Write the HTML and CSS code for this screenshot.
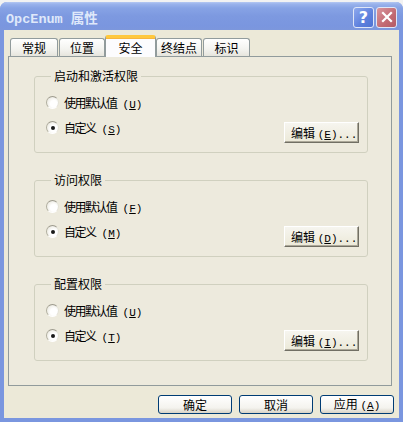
FILE: index.html
```html
<!DOCTYPE html>
<html lang="zh-CN">
<head>
    <meta charset="UTF-8">
    <title>OpcEnum 属性</title>
    <link rel="stylesheet" href="styles.css">
</head>
<body>
    <div class="window">
        <div class="titlebar">
            <span class="title">OpcEnum 属性</span>
            <div class="caption-buttons">
                <span class="cap-btn help">?</span>
                <span class="cap-btn close">
                    <svg width="12" height="12" viewBox="0 0 12 12">
                        <path d="M2 2 L10 10 M10 2 L2 10" stroke="#fff" stroke-width="2.2" stroke-linecap="square"/>
                    </svg>
                </span>
            </div>
        </div>
        <div class="client">
            <div class="tabs">
                <div class="tab t-general">常规</div>
                <div class="tab t-location">位置</div>
                <div class="tab t-security active">安全</div>
                <div class="tab t-endpoint">终结点</div>
                <div class="tab t-identity">标识</div>
            </div>
            <div class="panel">
                <fieldset class="group">
                    <legend>启动和激活权限</legend>
                    <div class="row">
                        <span class="radio"></span>
                        <span class="label">使用默认值<span class="key">(<u>U</u>)</span></span>
                    </div>
                    <div class="row row-edit">
                        <span class="radio checked"></span>
                        <span class="label">自定义<span class="key">(<u>S</u>)</span></span>
                        <button class="edit">编辑 <span class="key">(<u>E</u>)...</span></button>
                    </div>
                </fieldset>
                <fieldset class="group">
                    <legend>访问权限</legend>
                    <div class="row">
                        <span class="radio"></span>
                        <span class="label">使用默认值<span class="key">(<u>F</u>)</span></span>
                    </div>
                    <div class="row row-edit">
                        <span class="radio checked"></span>
                        <span class="label">自定义<span class="key">(<u>M</u>)</span></span>
                        <button class="edit">编辑 <span class="key">(<u>D</u>)...</span></button>
                    </div>
                </fieldset>
                <fieldset class="group">
                    <legend>配置权限</legend>
                    <div class="row">
                        <span class="radio"></span>
                        <span class="label">使用默认值<span class="key">(<u>U</u>)</span></span>
                    </div>
                    <div class="row row-edit">
                        <span class="radio checked"></span>
                        <span class="label">自定义<span class="key">(<u>T</u>)</span></span>
                        <button class="edit">编辑 <span class="key">(<u>I</u>)...</span></button>
                    </div>
                </fieldset>
            </div>
            <div class="actions">
                <button class="btn">确定</button>
                <button class="btn">取消</button>
                <button class="btn">应用 <span class="key">(<u>A</u>)</span></button>
            </div>
        </div>
    </div>
</body>
</html>
```

FILE: styles.css
```css
body {
    margin: 0;
    background: #f2f2f2;
    font-family: "Noto Sans CJK SC", sans-serif;
    font-size: 12px;
    color: #000;
}
.window {
    width: 403px;
    height: 420px;
    margin-top: 2px;
    display: flex;
    flex-direction: column;
    background: #7a96df;
    border-radius: 7px 7px 0 0;
    overflow: hidden;
}
.titlebar {
    height: 28px;
    flex: none;
    display: flex;
    align-items: center;
    justify-content: space-between;
    padding: 0 6px;
    background: linear-gradient(#b4c8f2 0, #9ab3ec 2px, #87a3e5 6px, #7d99e0 14px, #7a96df 24px, #7c97dc 28px);
}
.title {
    font-family: "Liberation Mono", "Noto Sans CJK SC", monospace;
    font-weight: bold;
    font-size: 13.5px;
    color: #dfe8fa;
    padding-top: 1px;
}
.caption-buttons {
    display: flex;
    gap: 2px;
    padding-top: 2px;
}
.cap-btn {
    width: 19px;
    height: 19px;
    border: 1px solid #dfe6f7;
    border-radius: 3px;
    display: flex;
    align-items: center;
    justify-content: center;
}
.help {
    background: linear-gradient(135deg, #8ea9ee, #5d80dd 60%, #4f72d2);
    color: #fff;
    font-family: "DejaVu Sans", sans-serif;
    font-weight: bold;
    font-size: 16px;
    line-height: 19px;
}
.close {
    background: linear-gradient(135deg, #d9959c, #c26a73 60%, #b35a64);
}

.client {
    flex: 1;
    margin: 0 4px 4px;
    background: #ece9d8;
    padding: 5px 0 0 4px;
    display: flex;
    flex-direction: column;
}
.tabs {
    display: flex;
    align-items: flex-end;
    padding-left: 2px;
    height: 21px;
}
.tab {
    height: 17px;
    line-height: 17px;
    text-align: center;
    border: 1px solid #919b9c;
    border-bottom: none;
    border-radius: 3px 3px 0 0;
    background: linear-gradient(#ffffff, #f3f3ef 60%, #e6e5dd);
}
.t-general { width: 46px; }
.t-location { width: 44px; margin-left: 1px; }
.t-security { width: 49px; }
.t-endpoint { width: 44px; }
.t-identity { width: 45px; margin-left: 1px; }
.tab.active {
    position: relative;
    height: 19px;
    line-height: 20px;
    margin-bottom: -1px;
    border-top: 3px solid #ffc83c;
    box-shadow: inset 0 1px 0 #f7b53d;
    background: #fcfcfe;
}
.panel {
    width: 382px;
    border: 1px solid #919b9c;
    background: #edeadd;
    padding: 13px 0 24px;
    display: flex;
    flex-direction: column;
    gap: 21px;
}
.group {
    margin: 0 23px 0 25px;
    padding: 11px 8px 9px 11px;
    border: 1px solid #d0d0bf;
    border-radius: 3px;
}
.group legend {
    font-size: 12px;
    line-height: 12px;
    padding: 0 3px;
    margin-left: 5px;
}
.row {
    display: flex;
    align-items: center;
    height: 18px;
}
.row-edit {
    margin-top: 8px;
    align-items: flex-start;
    height: 24px;
}
.row-edit .radio {
    margin-top: 2px;
}
.row-edit .label {
    line-height: 18px;
}
.radio {
    width: 11px;
    height: 11px;
    flex: none;
    border-radius: 50%;
    border: 1px solid;
    border-color: #9d9b8e #e4e2d8 #ffffff #b0ae9f;
    background: radial-gradient(circle at 62% 62%, #ffffff 35%, #e9e7dd 85%, #d6d3c6);
    display: flex;
    align-items: center;
    justify-content: center;
}
.radio.checked::after {
    content: "";
    width: 4px;
    height: 4px;
    border-radius: 50%;
    background: #1a1a1a;
}
.label {
    margin-left: 5px;
    letter-spacing: -1.5px;
}
.label .key {
    margin-left: 6px;
}
.key {
    font-family: "Liberation Mono", monospace;
    font-size: 11px;
    letter-spacing: 0;
}
.edit {
    margin-left: auto;
    margin-top: 3px;
    width: 75px;
    height: 21px;
    padding: 0 0 0 6px;
    text-align: left;
    font-family: "Noto Sans CJK SC", sans-serif;
    font-size: 12px;
    color: #000;
    background: linear-gradient(#f6f5ef, #ece9d8);
    border: 1px solid;
    border-color: #ffffff #716f64 #716f64 #ffffff;
    box-shadow: inset -1px -1px 0 #aca899;
}
.actions {
    display: flex;
    justify-content: flex-end;
    gap: 7px;
    padding-right: 5px;
    margin-top: 9px;
}
.btn {
    width: 74px;
    height: 19px;
    padding: 0;
    font-family: "Noto Sans CJK SC", sans-serif;
    font-size: 12px;
    line-height: 16px;
    color: #000;
    border: 1px solid #003c74;
    border-radius: 3px;
    background: linear-gradient(#ffffff, #f4f3ee 70%, #d8d2c6);
}
```
